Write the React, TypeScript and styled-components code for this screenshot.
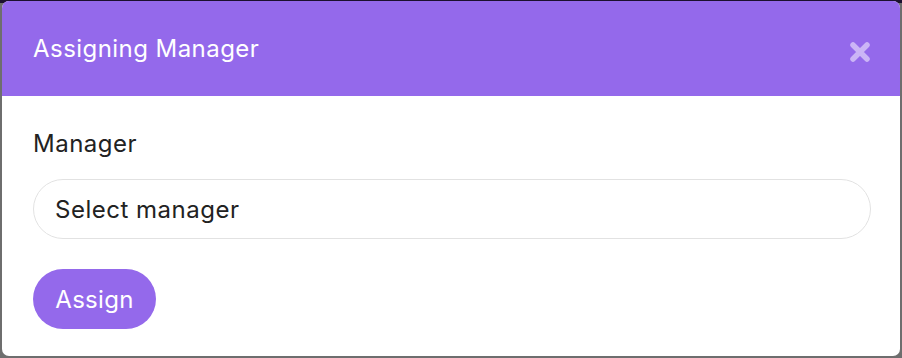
import React from "react";
import styled, { createGlobalStyle } from "styled-components";

const Global = createGlobalStyle`
  html, body { margin: 0; padding: 0; }
  body {
    width: 902px;
    height: 358px;
    overflow: hidden;
    background: #6e6e6e;
    font-family: Inter, "Noto Sans", sans-serif;
  }
`;

const Backdrop = styled.div`
  width: 902px;
  height: 358px;
  display: flex;
  flex-direction: column;
  background: linear-gradient(#1c1030 0 3px, #6e6e6e 3px);
  padding: 1px 2px 0 2px;
  box-sizing: border-box;
`;

const Modal = styled.div`
  width: 898px;
  height: 355px;
  border-radius: 7px;
  overflow: hidden;
  background: #ffffff;
  display: flex;
  flex-direction: column;
`;

const Header = styled.div`
  height: 95px;
  background: #9469eb;
  display: flex;
  align-items: center;
  justify-content: space-between;
  padding: 0 29px 0 31px;
  box-sizing: border-box;
`;

const Title = styled.h2`
  margin: 0;
  color: #ffffff;
  font-size: 24px;
  font-weight: 400;
  letter-spacing: 0.45px;
`;

const Close = styled.button`
  border: 0;
  background: none;
  padding: 0;
  margin-top: 6px;
  width: 22px;
  height: 22px;
  display: flex;
  align-items: center;
  justify-content: center;
  cursor: pointer;
`;

const Body = styled.div`
  padding: 33px 29px 0 31px;
  display: flex;
  flex-direction: column;
`;

const Label = styled.label`
  font-size: 24px;
  color: #222222;
  line-height: 30px;
  letter-spacing: 0.5px;
  margin-bottom: 20px;
`;

const Select = styled.div`
  height: 60px;
  border: 1px solid #e2e2e2;
  border-radius: 30px;
  box-sizing: border-box;
  display: flex;
  align-items: center;
  padding-left: 21px;
  font-size: 24px;
  letter-spacing: 0.5px;
  color: #222222;
`;

const Button = styled.button`
  margin-top: 30px;
  align-self: flex-start;
  height: 60px;
  width: 123px;
  border: 0;
  border-radius: 30px;
  background: #9469eb;
  color: #ffffff;
  font-family: inherit;
  font-size: 24px;
  letter-spacing: 0.3px;
  cursor: pointer;
`;

export default function App() {
  return (
    <>
      <Global />
      <Backdrop>
        <Modal>
          <Header>
            <Title>Assigning Manager</Title>
            <Close aria-label="Close">
              <svg width="22" height="22" viewBox="0 0 22 22">
                <path
                  d="M4 4 L18 18 M18 4 L4 18"
                  stroke="#cbb5f6"
                  strokeWidth="5.5"
                  strokeLinecap="round"
                />
              </svg>
            </Close>
          </Header>
          <Body>
            <Label>Manager</Label>
            <Select>Select manager</Select>
            <Button>Assign</Button>
          </Body>
        </Modal>
      </Backdrop>
    </>
  );
}
